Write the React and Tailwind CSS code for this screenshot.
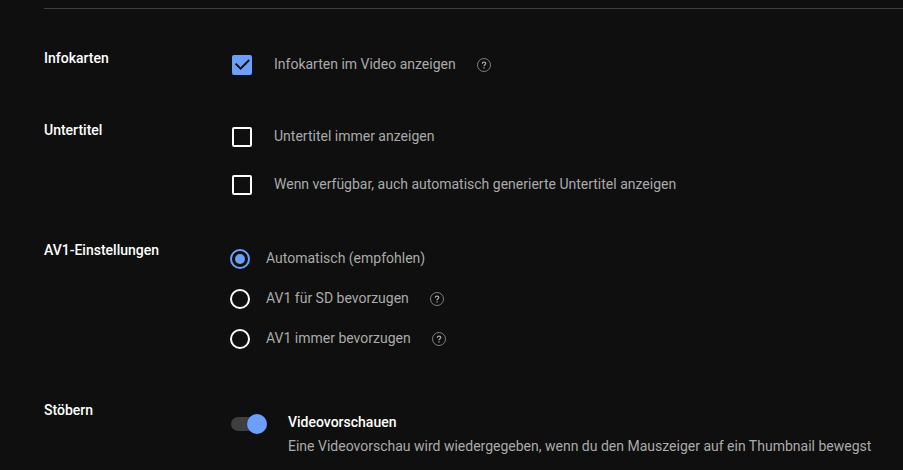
import React, { useState } from "react";

function HelpButton({ label }) {
  return (
    <button type="button" aria-label={label} className="ml-5 flex h-5 items-center">
      <svg
        width="16"
        height="16"
        viewBox="0 0 16 16"
        fill="none"
        stroke="#aaaaaa"
        aria-hidden="true"
      >
        <circle cx="8" cy="8" r="6.5" strokeWidth="0.7" />
        <path d="M6.3 6.7C6.3 5.6 7 5.1 8 5.1s1.8.6 1.8 1.5c0 1.2-1.8 1.2-1.8 2.6" strokeWidth="1.2" />
        <path d="M8 10.2v1.2" strokeWidth="1.2" />
      </svg>
    </button>
  );
}

function Section({ title, children }) {
  return (
    <section className="flex pl-11">
      <h2 className="w-[186px] shrink-0 font-medium">{title}</h2>
      {children}
    </section>
  );
}

function CheckboxRow({ id, label, defaultChecked, help }) {
  const [checked, setChecked] = useState(Boolean(defaultChecked));

  return (
    <div className="flex h-5 items-start">
      <span className="grid h-5 w-5 shrink-0">
        <input
          type="checkbox"
          id={id}
          checked={checked}
          onChange={(e) => setChecked(e.target.checked)}
          className="col-start-1 row-start-1 h-5 w-5 appearance-none rounded-xs border-2 border-white checked:border-[#6a9ffb] checked:bg-[#6a9ffb]"
        />
        {checked && (
          <svg
            viewBox="0 0 20 20"
            className="pointer-events-none col-start-1 row-start-1 h-5 w-5"
            fill="none"
            stroke="#0f0f0f"
            strokeWidth="2"
            aria-hidden="true"
          >
            <path d="M3.6 8.6l5 5 8.6-8.6" />
          </svg>
        )}
      </span>
      <label htmlFor={id} className="ml-[22px] leading-[18px] text-[#aaaaaa]">
        {label}
      </label>
      {help && <HelpButton label={`Hilfe: ${label}`} />}
    </div>
  );
}

function RadioRow({ id, label, checked, onSelect, help }) {
  return (
    <div className="flex h-5 items-start">
      <span className="grid h-5 w-5 shrink-0 place-items-center">
        <input
          type="radio"
          name="av1"
          id={id}
          checked={checked}
          onChange={() => onSelect(id)}
          className="col-start-1 row-start-1 h-5 w-5 appearance-none rounded-full border-2 border-white checked:border-[#6a9ffb]"
        />
        {checked && (
          <span className="pointer-events-none col-start-1 row-start-1 h-2.5 w-2.5 rounded-full bg-[#6a9ffb]" />
        )}
      </span>
      <label htmlFor={id} className="ml-4 leading-[18px] text-[#aaaaaa]">
        {label}
      </label>
      {help && <HelpButton label={`Hilfe: ${label}`} />}
    </div>
  );
}

const av1Options = [
  { id: "av1-auto", label: "Automatisch (empfohlen)" },
  { id: "av1-sd", label: "AV1 für SD bevorzugen", help: true },
  { id: "av1-always", label: "AV1 immer bevorzugen", help: true },
];

function App() {
  const [av1, setAv1] = useState("av1-auto");
  const [preview, setPreview] = useState(true);

  return (
    <main className="min-h-screen bg-[#0f0f0f] pt-2 font-['Roboto',sans-serif] text-sm leading-5 text-white">
      <hr className="ml-11 border-[#3f3f3f]" />

      <div className="pt-[39px]">
        <Section title="Infokarten">
          <div className="pt-[7px] pb-[45px] pl-0.5">
            <CheckboxRow
              id="info-cards"
              label="Infokarten im Video anzeigen"
              defaultChecked
              help
            />
          </div>
        </Section>

        <Section title="Untertitel">
          <div className="flex flex-col gap-7 pt-[7px] pb-[45px] pl-0.5">
            <CheckboxRow id="captions" label="Untertitel immer anzeigen" />
            <CheckboxRow
              id="auto-captions"
              label="Wenn verfügbar, auch automatisch generierte Untertitel anzeigen"
            />
          </div>
        </Section>

        <Section title="AV1-Einstellungen">
          <div className="flex flex-col gap-5 pt-[9px] pb-[51px]">
            {av1Options.map((option) => (
              <RadioRow
                key={option.id}
                {...option}
                checked={av1 === option.id}
                onSelect={setAv1}
              />
            ))}
          </div>
        </Section>

        <Section title="Stöbern">
          <div className="flex pt-3">
            <button
              type="button"
              role="switch"
              aria-checked={preview}
              aria-labelledby="preview-label"
              onClick={() => setPreview(!preview)}
              className="mt-0.5 ml-px grid h-5 w-9 shrink-0 items-center"
            >
              <span className="col-start-1 row-start-1 h-3.5 w-9 rounded-full bg-[#3f3f3f]" />
              <span
                className={
                  preview
                    ? "col-start-1 row-start-1 h-5 w-5 justify-self-end rounded-full bg-[#6a9ffb] shadow-sm"
                    : "col-start-1 row-start-1 h-5 w-5 justify-self-start rounded-full bg-[#909090] shadow-sm"
                }
              />
            </button>
            <div className="ml-[21px]">
              <h3 id="preview-label" className="font-medium">
                Videovorschauen
              </h3>
              <p className="mt-1 text-[#aaaaaa]">
                Eine Videovorschau wird wiedergegeben, wenn du den Mauszeiger auf ein Thumbnail bewegst
              </p>
            </div>
          </div>
        </Section>
      </div>
    </main>
  );
}

export default App;
